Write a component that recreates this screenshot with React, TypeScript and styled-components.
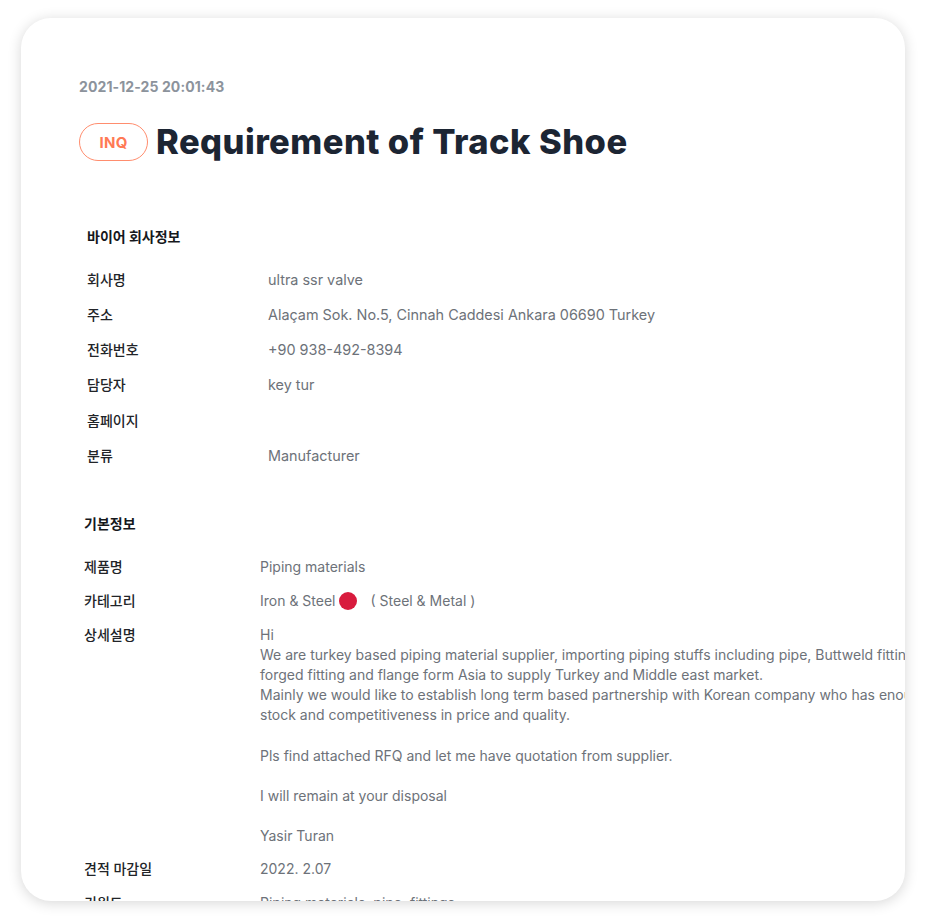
import React from "react";
import styled, { createGlobalStyle } from "styled-components";

const GlobalStyle = createGlobalStyle`
  html, body {
    margin: 0;
    padding: 0;
    background: #ffffff;
  }
  body {
    font-family: Inter, "Noto Sans CJK KR", "Noto Sans", sans-serif;
    -webkit-font-smoothing: antialiased;
  }
  * { box-sizing: border-box; }
`;

const Page = styled.div`
  width: 925px;
  height: 920px;
  padding: 18px 20px 19px 21px;
  overflow: hidden;
`;

const Card = styled.article`
  height: 883px;
  background: #ffffff;
  border-radius: 30px;
  box-shadow: 0 2px 14px rgba(0, 0, 0, 0.16);
  padding: 59px 0 0 58px;
  overflow: hidden;
`;

const DateText = styled.div`
  font-size: 14px;
  line-height: 20px;
  font-weight: 700;
  color: #8c939c;
  letter-spacing: 0.1px;
`;

const TitleRow = styled.div`
  display: flex;
  align-items: center;
  gap: 8px;
  margin-top: 25px;
`;

const Badge = styled.span`
  display: inline-flex;
  align-items: center;
  justify-content: center;
  width: 69px;
  height: 38px;
  border: 1px solid #ff8d6e;
  border-radius: 19px;
  color: #ff7a55;
  font-size: 15px;
  font-weight: 700;
  letter-spacing: 0.3px;
`;

const Title = styled.h1`
  margin: 0;
  font-size: 34.5px;
  line-height: 40px;
  font-weight: 800;
  color: #1c2533;
  letter-spacing: 0.45px;
  white-space: nowrap;
`;

const Section = styled.section<{ $indent: number; $top: number; $rowPad: number; $valueSize: number }>`
  margin-top: ${(p) => p.$top}px;
  padding-left: ${(p) => p.$indent}px;
  --row-pad: ${(p) => p.$rowPad}px;
  --value-size: ${(p) => p.$valueSize}px;
`;

const SectionTitle = styled.h2<{ $gap: number }>`
  margin: 0 0 ${(p) => p.$gap}px;
  font-size: 14px;
  line-height: 20px;
  font-weight: 700;
  color: #16181c;
`;

const Row = styled.div<{ $labelWidth: number }>`
  display: grid;
  grid-template-columns: ${(p) => p.$labelWidth}px 1fr;
  padding: var(--row-pad) 0;
  font-size: 14px;
  line-height: 20px;
`;

const Label = styled.div`
  color: #222428;
  font-weight: 500;
  white-space: nowrap;
`;

const Value = styled.div`
  color: #6d7279;
  font-size: var(--value-size);
  white-space: nowrap;
  display: flex;
  align-items: center;
`;

const Lines = styled.div`
  color: #6d7279;
  line-height: 20.15px;
  margin-bottom: -1px;
  white-space: pre;
`;

const Dot = styled.span`
  display: inline-block;
  width: 18px;
  height: 18px;
  border-radius: 50%;
  background: #d81b3d;
  margin: 0 14px 0 3px;
`;

const companyRows: [string, string][] = [
  ["회사명", "ultra ssr valve"],
  ["주소", "Alaçam Sok. No.5, Cinnah Caddesi Ankara 06690 Turkey"],
  ["전화번호", "+90 938-492-8394"],
  ["담당자", "key tur"],
  ["홈페이지", ""],
  ["분류", "Manufacturer"],
];

const description = [
  "Hi",
  "We are turkey based piping material supplier, importing piping stuffs including pipe, Buttweld fitting,",
  "forged fitting and flange form Asia to supply Turkey and Middle east market.",
  "Mainly we would like to establish long term based partnership with Korean company who has enough",
  "stock and competitiveness in price and quality.",
  "",
  "Pls find attached RFQ and let me have quotation from supplier.",
  "",
  "I will remain at your disposal",
  "",
  "Yasir Turan",
].join("\n");

export default function App() {
  return (
    <>
      <GlobalStyle />
      <Page>
        <Card>
          <DateText>2021-12-25 20:01:43</DateText>
          <TitleRow>
            <Badge>INQ</Badge>
            <Title>Requirement of Track Shoe</Title>
          </TitleRow>

          <Section $indent={8} $top={65} $rowPad={7.65} $valueSize={14.4}>
            <SectionTitle $gap={15}>바이어 회사정보</SectionTitle>
            {companyRows.map(([label, value]) => (
              <Row key={label} $labelWidth={181}>
                <Label>{label}</Label>
                <Value>{value}</Value>
              </Row>
            ))}
          </Section>

          <Section $indent={5} $top={40} $rowPad={7} $valueSize={14}>
            <SectionTitle $gap={16}>기본정보</SectionTitle>
            <Row $labelWidth={176}>
              <Label>제품명</Label>
              <Value>Piping materials</Value>
            </Row>
            <Row $labelWidth={176}>
              <Label>카테고리</Label>
              <Value>
                Iron &amp; Steel
                <Dot />( Steel &amp; Metal )
              </Value>
            </Row>
            <Row $labelWidth={176}>
              <Label>상세설명</Label>
              <Lines>{description}</Lines>
            </Row>
            <Row $labelWidth={176}>
              <Label>견적 마감일</Label>
              <Value>2022. 2.07</Value>
            </Row>
            <Row $labelWidth={176}>
              <Label>키워드</Label>
              <Value>Piping materials, pipe, fittings</Value>
            </Row>
          </Section>
        </Card>
      </Page>
    </>
  );
}
